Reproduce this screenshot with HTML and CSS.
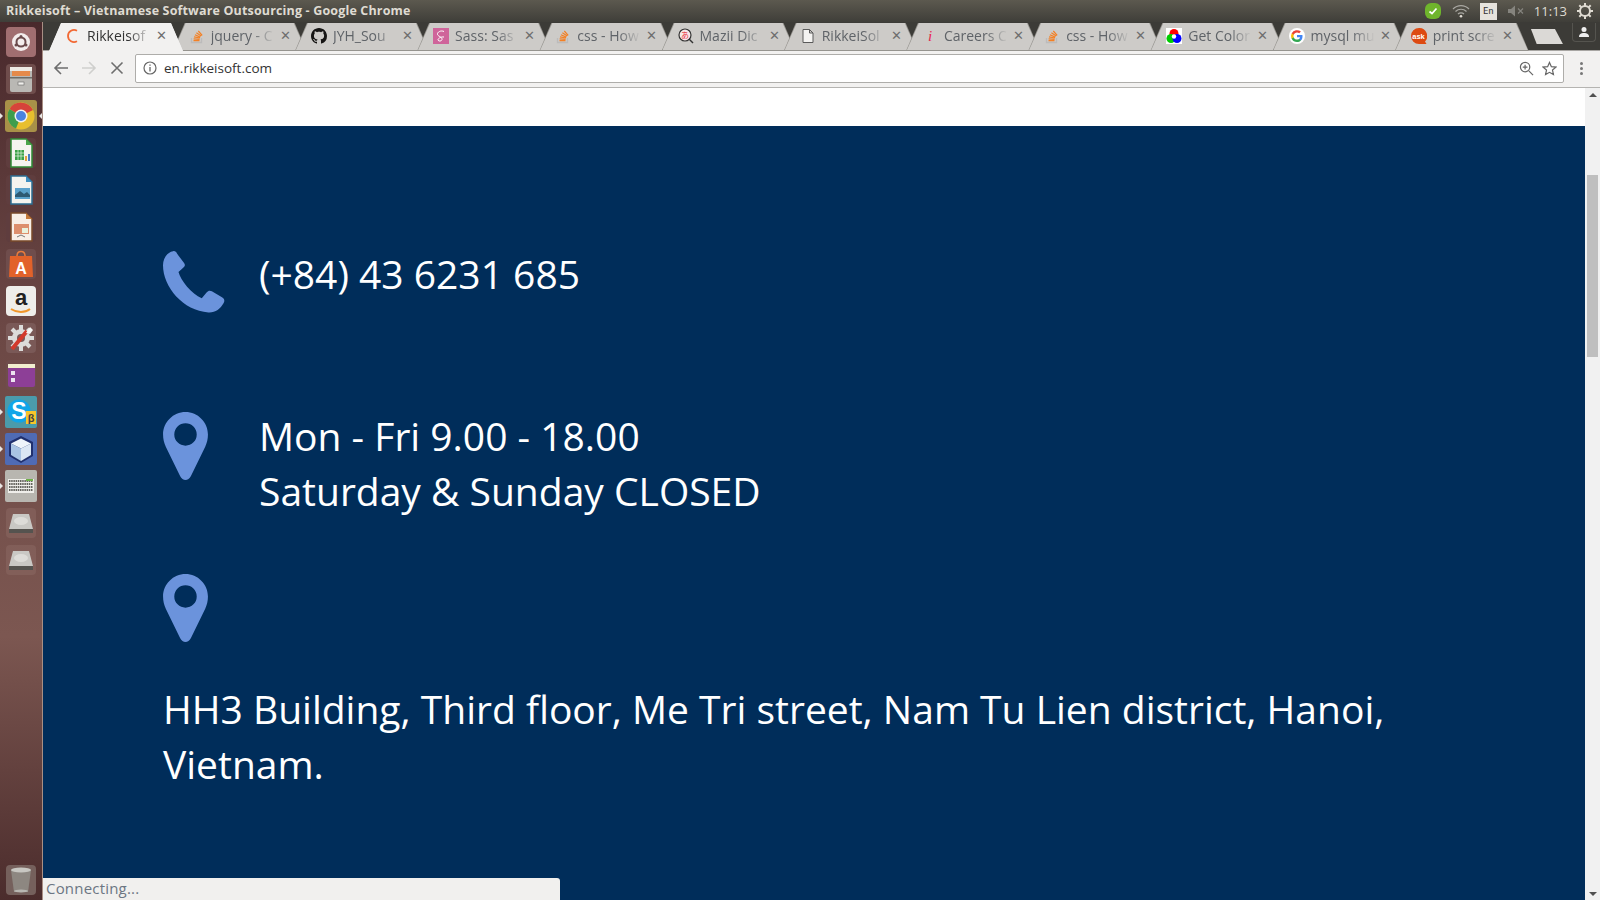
FILE: index.html
```html
<!DOCTYPE html>
<html lang="en">
<head>
  <meta charset="UTF-8" />
  <title>Rikkeisoft – Vietnamese Software Outsourcing - Google Chrome</title>
  <link rel="stylesheet" href="styles.css">
</head>
<body>
  <svg class="defs" width="0" height="0">
    <symbol id="so" viewBox="0 0 16 16">
      <path d="M2.500 10v4.500h10V10" fill="none" stroke="#bcbbbb" stroke-width="1.300"/>
      <path d="M4.500 12.700h6M4.600 10.800l6 .5M5 8.800l5.900 1.200M5.900 6.700l5.400 2.400M7.400 4.700l4.800 3.400M9.300 3l3.900 4.400" fill="none" stroke="#f48024" stroke-width="1.200"/>
    </symbol>
    <symbol id="pin" viewBox="0 0 132 200">
      <path fill-rule="evenodd" d="M66 0C30 0 0 30 0 66c0 14 3 24 8 36l42 86c8 16 24 16 32 0l42-86c5-12 8-22 8-36C132 30 102 0 66 0zm0 33a33 33 0 1 1 0 66 33 33 0 0 1 0-66z"/>
    </symbol>
    <symbol id="disk" viewBox="0 0 32 32">
      <rect x="1" y="1" width="30" height="30" rx="4" fill="#8a6763" fill-opacity=".55"/>
      <path d="M8 7h16l4 15H4z" fill="#c9c8c4"/>
      <path d="M4 22h24v4H4z" fill="#55534f"/>
      <ellipse cx="16" cy="14" rx="7" ry="4" fill="#dddcd8"/>
    </symbol>
  </svg>

  <div class="titlebar">
    <span class="title">Rikkeisoft – Vietnamese Software Outsourcing - Google Chrome</span>
    <div class="tray">
      <svg class="tray-skype" width="18" height="18" viewBox="0 0 18 18"><rect x="1" y="1" width="16" height="16" rx="6" fill="#6fb52c"/><path d="M5.500 9.500l2.500 2 4.500-5" fill="none" stroke="#fff" stroke-width="1.700"/></svg>
      <svg class="tray-wifi" width="18" height="14" viewBox="0 0 18 14"><path d="M1 5c4.500-4.500 11.500-4.500 16 0M3.500 7.500c3-3 8-3 11 0M6 10c1.600-1.600 4.400-1.600 6 0" fill="none" stroke="#a9a8a2" stroke-width="1.200"/><circle cx="9" cy="12.200" r="1.300" fill="#dfdbd2"/></svg>
      <span class="tray-lang">En</span>
      <svg class="tray-sound" width="16" height="12" viewBox="0 0 16 12"><path d="M0 4h3l4-3.500v11L3 8H0z" fill="#85847e"/><path d="M10 3.500l5 5M15 3.500l-5 5" stroke="#85847e" stroke-width="1.200"/></svg>
      <span class="tray-time">11:13</span>
      <svg class="tray-gear" width="16" height="16" viewBox="0 0 16 16"><circle cx="8" cy="8" r="5" fill="none" stroke="#dfdbd2" stroke-width="2"/><path d="M8 0v3M8 13v3M0 8h3M13 8h3M2.300 2.300l2.100 2.100M11.600 11.600l2.100 2.100M13.700 2.300l-2.100 2.100M4.400 11.600l-2.100 2.100" stroke="#dfdbd2" stroke-width="2"/></svg>
    </div>
  </div>

  <div class="desktop">
    <nav class="launcher">
      <svg class="tile" viewBox="0 0 32 32"><rect x="1" y="1" width="30" height="30" rx="4" fill="#a06e70"/><circle cx="16" cy="16" r="9" fill="#f3ecec"/><circle cx="16" cy="16" r="4.500" fill="none" stroke="#6b4a4c" stroke-width="2"/><circle cx="16" cy="10.500" r="1.500" fill="#6b4a4c"/><circle cx="11" cy="19" r="1.500" fill="#6b4a4c"/><circle cx="21" cy="19" r="1.500" fill="#6b4a4c"/></svg>
      <svg class="tile" viewBox="0 0 32 32"><rect x="1" y="1" width="30" height="30" rx="4" fill="#6f4d4c"/><rect x="5" y="4" width="22" height="25" rx="2" fill="#b9b8b4"/><rect x="5" y="4" width="22" height="4" fill="#ece9e4"/><rect x="7" y="8" width="18" height="5" fill="#e58a4a"/><rect x="5" y="14" width="22" height="1.500" fill="#6d6c68"/><rect x="13" y="19" width="6" height="3" fill="#f0efec" stroke="#666" stroke-width=".6"/></svg>
      <div class="running focused">
        <svg class="tile" viewBox="0 0 32 32"><rect width="32" height="32" rx="3" fill="#a89148"/><circle cx="16" cy="16" r="13.500" fill="#e8bf2e"/><path d="M16 16L4.500 9A13.500 13.500 0 0 1 28 10z" fill="#d6433a"/><path d="M16 16L4.500 9A13.500 13.500 0 0 0 11 28.500z" fill="#3e9d4d"/><circle cx="16" cy="16" r="6.500" fill="#f2f2f2"/><circle cx="16" cy="16" r="5" fill="#4a83e0"/></svg>
      </div>
      <svg class="tile" viewBox="0 0 32 32"><rect x="1" y="1" width="30" height="30" rx="4" fill="#5f3d3e"/><path d="M6 2h15l6 6v22H6z" fill="#f4f4ef" stroke="#2f8b36" stroke-width="1.500"/><path d="M21 2l6 6h-6z" fill="#4aa54a"/><rect x="10" y="13" width="9" height="10" fill="#3aa146"/><path d="M10 16h9M10 19h9M13 13v10M16 13v10" stroke="#e8f3e5" stroke-width=".7"/><rect x="20" y="19" width="2" height="5" fill="#e0a33c"/><rect x="23" y="17" width="2" height="7" fill="#4b7fc4"/></svg>
      <svg class="tile" viewBox="0 0 32 32"><rect x="1" y="1" width="30" height="30" rx="4" fill="#5f3d3e"/><path d="M6 2h15l6 6v22H6z" fill="#f4f4ef" stroke="#2b6d92" stroke-width="1.500"/><path d="M21 2l6 6h-6z" fill="#3f8fc0"/><rect x="10" y="14" width="15" height="11" fill="#5aa2cb"/><path d="M10 21l5-4 4 3 3-2 3 3v2H10z" fill="#2d5a72"/></svg>
      <svg class="tile" viewBox="0 0 32 32"><rect x="1" y="1" width="30" height="30" rx="4" fill="#5f3d3e"/><path d="M6 2h15l6 6v22H6z" fill="#f8efe6" stroke="#7a4a2a" stroke-width="1.500"/><path d="M21 2l6 6h-6z" fill="#c47a3a"/><rect x="9" y="13" width="15" height="10" fill="#dd8f6c"/><rect x="17" y="17" width="6" height="5" fill="#e9f2dc"/><path d="M12 26l4-2 4 2" fill="none" stroke="#555" stroke-width=".8"/></svg>
      <svg class="tile" viewBox="0 0 32 32"><rect x="1" y="1" width="30" height="30" rx="4" fill="#6f4d4c"/><path d="M12 8c0-6 8-6 8 0" fill="none" stroke="#e87b3c" stroke-width="1.500"/><path d="M5 8h22l1 21H4z" fill="#e2622a"/><text class="tile-letter" x="16" y="26" font-size="16" fill="#fff">A</text></svg>
      <svg class="tile" viewBox="0 0 32 32"><rect x="1" y="1" width="30" height="30" rx="4" fill="#efeeea"/><text class="tile-letter" x="16" y="20" font-size="22" fill="#222">a</text><path d="M6 24c6 4 14 4 19 0" fill="none" stroke="#f0962a" stroke-width="2"/></svg>
      <svg class="tile" viewBox="0 0 32 32"><rect x="1" y="1" width="30" height="30" rx="4" fill="#7a5957"/><circle cx="16" cy="16" r="9" fill="#dcdcda"/><path d="M16 3v26M3 16h26M7 7l18 18M25 7L7 25" stroke="#dcdcda" stroke-width="4"/><circle cx="16" cy="16" r="4" fill="#7a5957"/><path d="M7 27L22 9" stroke="#d33a2c" stroke-width="4"/><path d="M21 11l4-6 3 3-3 4z" fill="#f4f4f2"/></svg>
      <svg class="tile" viewBox="0 0 32 32"><rect x="1" y="1" width="30" height="30" rx="4" fill="#6f4d4c"/><rect x="3" y="5" width="27" height="23" rx="2" fill="#8d3f97"/><rect x="3" y="5" width="27" height="4" fill="#f1eed0"/><rect x="6" y="12" width="4" height="4" fill="#ece2ef"/><rect x="6" y="19" width="4" height="4" fill="#ece2ef"/></svg>
      <div class="running">
        <svg class="tile" viewBox="0 0 32 32"><rect width="32" height="32" rx="2" fill="#4b9bab"/><circle cx="14" cy="15" r="11.500" fill="#10a5e8"/><text class="tile-letter" x="14" y="23" font-size="23" fill="#fff">S</text><rect x="21" y="15" width="10" height="13" fill="#f7c52b"/><text class="tile-letter" x="26" y="26" font-size="11" fill="#444">β</text></svg>
      </div>
      <div class="running">
        <svg class="tile" viewBox="0 0 32 32"><rect width="32" height="32" rx="2" fill="#4f6bb5"/><path d="M16 3l12 6v14l-12 7-12-7V9z" fill="#20306e"/><path d="M16 5.500l10 5-10 5-10-5z" fill="#eef4fa"/><path d="M6 10.500l10 5V28l-10-6z" fill="#a9c4e4"/><path d="M26 10.500l-10 5V28l10-6z" fill="#dbe7f4"/></svg>
      </div>
      <div class="running">
        <svg class="tile" viewBox="0 0 32 32"><rect width="32" height="32" rx="2" fill="#b8b6b0"/><rect x="3" y="9" width="26" height="14" fill="#efeeea"/><path d="M4 11h24M4 14h24M4 17h24M4 20h24" stroke="#66655f" stroke-width="2" stroke-dasharray="1.500 .7"/><path d="M21 9h7v2h-7z" fill="#6fb04a"/></svg>
      </div>
      <svg class="tile"><use href="#disk"/></svg>
      <svg class="tile"><use href="#disk"/></svg>
      <svg class="tile trash" viewBox="0 0 32 32"><rect x="1" y="1" width="30" height="30" rx="4" fill="#75605c"/><path d="M6 6h20l-3 22H9z" fill="#8d8781"/><ellipse cx="16" cy="6" rx="10" ry="2.500" fill="#c8c7c2"/><ellipse cx="16" cy="27" rx="7" ry="1.500" fill="#b9b7b2"/></svg>
    </nav>

    <div class="browser">
      <div class="tabstrip">
        <div class="tab active">
          <svg class="favicon" viewBox="0 0 16 16"><path d="M12 2.800A6 6 0 1 0 12 13.200" fill="none" stroke="#f26a35" stroke-width="1.800"/></svg>
          <span class="tab-label">Rikkeisof</span><span class="tab-close">✕</span>
        </div>
        <div class="tab">
          <svg class="favicon"><use href="#so"/></svg>
          <span class="tab-label">jquery - C</span><span class="tab-close">✕</span>
        </div>
        <div class="tab">
          <svg class="favicon" viewBox="0 0 16 16"><path fill="#161514" d="M8 0C3.580 0 0 3.580 0 8c0 3.540 2.290 6.530 5.470 7.590.4.070.55-.17.55-.38 0-.19-.01-.82-.01-1.490-2.010.37-2.530-.49-2.690-.94-.09-.23-.48-.94-.82-1.130-.28-.15-.68-.52-.01-.53.63-.01 1.080.58 1.230.82.720 1.210 1.870.87 2.330.66.070-.52.280-.87.510-1.070-1.780-.2-3.640-.89-3.640-3.950 0-.87.310-1.590.820-2.150-.08-.2-.36-1.020.08-2.120 0 0 .67-.21 2.200.82.640-.18 1.320-.27 2-.27s1.360.09 2 .27c1.530-1.040 2.200-.82 2.200-.82.440 1.100.160 1.920.080 2.120.510.560.820 1.270.820 2.150 0 3.070-1.870 3.750-3.650 3.950.29.25.54.73.54 1.480 0 1.070-.01 1.930-.01 2.200 0 .21.150.46.550.38A8.013 8.013 0 0 0 16 8c0-4.420-3.580-8-8-8z"/></svg>
          <span class="tab-label">JYH_Sou</span><span class="tab-close">✕</span>
        </div>
        <div class="tab">
          <svg class="favicon" viewBox="0 0 16 16"><rect width="16" height="16" fill="#cf649a"/><path d="M11 3.500C8 2 4 4 4.500 6.500c.4 1.800 5 2.500 4.500 5-.3 1.800-3.500 2.200-4 .5-.4-1.400 3-3.500 6-3" fill="none" stroke="#fff" stroke-width="1"/></svg>
          <span class="tab-label">Sass: Sas</span><span class="tab-close">✕</span>
        </div>
        <div class="tab">
          <svg class="favicon"><use href="#so"/></svg>
          <span class="tab-label">css - How</span><span class="tab-close">✕</span>
        </div>
        <div class="tab">
          <svg class="favicon" viewBox="0 0 16 16"><circle cx="7" cy="7" r="6" fill="#f6e9e9" stroke="#333" stroke-width="1.200"/><path d="M11 11l4 4" stroke="#333" stroke-width="1.400"/><text class="fav-kana" x="7" y="10" font-size="8" fill="#e8343f">あ</text></svg>
          <span class="tab-label">Mazii Dic</span><span class="tab-close">✕</span>
        </div>
        <div class="tab">
          <svg class="favicon" viewBox="0 0 16 16"><path d="M3 1.500h6.500l3.500 3.500v9.500H3zM9.500 1.500V5H13" fill="#f4f3f1" stroke="#5a5a5a" stroke-width="1"/></svg>
          <span class="tab-label">RikkeiSol</span><span class="tab-close">✕</span>
        </div>
        <div class="tab">
          <svg class="favicon" viewBox="0 0 16 16"><text class="fav-i" x="8" y="13" font-size="15" fill="#e8264f">i</text></svg>
          <span class="tab-label">Careers C</span><span class="tab-close">✕</span>
        </div>
        <div class="tab">
          <svg class="favicon"><use href="#so"/></svg>
          <span class="tab-label">css - How</span><span class="tab-close">✕</span>
        </div>
        <div class="tab">
          <svg class="favicon" viewBox="0 0 16 16"><rect width="16" height="16" fill="#fff"/><circle cx="8" cy="5.500" r="4.500" fill="#f00"/><circle cx="5" cy="10.500" r="4.500" fill="#0c0"/><circle cx="11" cy="10.500" r="4.500" fill="#00f"/><circle cx="8" cy="8.500" r="2.200" fill="#fff"/></svg>
          <span class="tab-label">Get Color</span><span class="tab-close">✕</span>
        </div>
        <div class="tab">
          <svg class="favicon" viewBox="0 0 16 16"><circle cx="8" cy="8" r="8" fill="#fff"/><path d="M13.500 8.200c0-.4 0-.8-.1-1.200H8v2.300h3.100a2.700 2.700 0 0 1-1.100 1.700v1.500h1.900c1.100-1 1.600-2.500 1.600-4.300z" fill="#4285f4"/><path d="M8 14c1.500 0 2.900-.5 3.900-1.500L10 11c-.5.400-1.200.6-2 .6-1.500 0-2.800-1-3.300-2.400h-2v1.500A6 6 0 0 0 8 14z" fill="#34a853"/><path d="M4.700 9.200a3.500 3.500 0 0 1 0-2.400V5.300h-2a6 6 0 0 0 0 5.400z" fill="#fbbc05"/><path d="M8 4.400c.9 0 1.600.3 2.200.9l1.700-1.700A6 6 0 0 0 2.700 5.300l2 1.500C5.200 5.400 6.500 4.400 8 4.400z" fill="#ea4335"/></svg>
          <span class="tab-label">mysql mu</span><span class="tab-close">✕</span>
        </div>
        <div class="tab">
          <svg class="favicon" viewBox="0 0 16 16"><path d="M8 0a8 8 0 1 0 0 16h7.500l-1.500-2.500A8 8 0 0 0 8 0z" fill="#dd4a12"/><text class="fav-ask" x="7.500" y="10.500" font-size="7.500" fill="#fff">ask</text></svg>
          <span class="tab-label">print scre</span><span class="tab-close">✕</span>
        </div>
        <div class="newtab"></div>
        <div class="profile">
          <svg width="12" height="12" viewBox="0 0 12 12"><circle cx="6" cy="3.500" r="2.500" fill="#eee"/><path d="M1 11c0-3 2-4 5-4s5 1 5 4z" fill="#eee"/></svg>
        </div>
      </div>

      <div class="toolbar">
        <svg class="tool" viewBox="0 0 16 16"><path d="M15 8H2M8 2L2 8l6 6" fill="none" stroke="#6e6e6e" stroke-width="1.600"/></svg>
        <svg class="tool" viewBox="0 0 16 16"><path d="M1 8h13M8 2l6 6-6 6" fill="none" stroke="#cfcfcd" stroke-width="1.600"/></svg>
        <svg class="tool" viewBox="0 0 16 16"><path d="M2.500 2.500l11 11M13.500 2.500l-11 11" fill="none" stroke="#6e6e6e" stroke-width="1.600"/></svg>
        <div class="omnibox">
          <svg class="site-info" viewBox="0 0 14 14"><circle cx="7" cy="7" r="6" fill="none" stroke="#666" stroke-width="1.200"/><path d="M7 6v4.500M7 3.500v1.300" stroke="#666" stroke-width="1.300"/></svg>
          <span class="url">en.rikkeisoft.com</span>
          <svg class="omni-icon" viewBox="0 0 16 16"><circle cx="6.500" cy="6.500" r="5" fill="none" stroke="#666" stroke-width="1.300"/><path d="M10.500 10.500l4.500 4.500M4 6.500h5M6.500 4v5" stroke="#666" stroke-width="1.300"/></svg>
          <svg class="omni-icon" viewBox="0 0 16 16"><path d="M8 1.500l2 4.500 4.800.5-3.600 3.200 1 4.800L8 12.100l-4.200 2.400 1-4.800L1.200 6.500 6 6z" fill="none" stroke="#666" stroke-width="1.300"/></svg>
        </div>
        <div class="menu-dots"><i></i><i></i><i></i></div>
      </div>

      <div class="viewport">
        <main class="page">
          <div class="page-top"></div>
          <section class="contact">
            <div class="contact-item">
              <div class="contact-icon">
                <svg class="icon-phone" viewBox="70 60 184 186"><path d="M70 105C70 85 82 66 100 63c6-1 9 2 12 8l20 26c5 7 3 11-2 15l-14 13c6 25 39 65 69 78l15-18c4-5 9-6 15-3l30 18c7 4 9 10 5 17-10 18-25 29-45 28C130 240 70 170 70 105z"/></svg>
              </div>
              <p>(+84) 43 6231 685</p>
            </div>
            <div class="contact-item">
              <div class="contact-icon"><svg class="icon-pin"><use href="#pin"/></svg></div>
              <p>Mon - Fri 9.00 - 18.00<br>Saturday &amp; Sunday CLOSED</p>
            </div>
            <div class="contact-item">
              <div class="contact-icon"><svg class="icon-pin"><use href="#pin"/></svg></div>
              <p class="address">HH3 Building, Third floor, Me Tri street, Nam Tu Lien district, Hanoi, Vietnam.</p>
            </div>
          </section>
        </main>
        <div class="scrollbar">
          <span class="arrow up"></span>
          <div class="thumb"></div>
          <span class="arrow down"></span>
        </div>
        <div class="status">Connecting...</div>
      </div>
    </div>
  </div>
</body>
</html>
```

FILE: styles.css
```css
* {
  box-sizing: border-box;
}

html, body {
  margin: 0;
  height: 100%;
  overflow: hidden;
}

body {
  display: flex;
  flex-direction: column;
  font-family: "Open Sans", "Noto Sans", sans-serif;
}

.defs {
  position: absolute;
}

/* top panel */
.titlebar {
  height: 22px;
  flex: none;
  display: flex;
  align-items: center;
  justify-content: space-between;
  padding-left: 6px;
  background: linear-gradient(#5c594f, #3f3e39);
  color: #dfdbd2;
}

.title {
  margin-bottom: 2px;
  font-size: 12.5px;
  font-weight: 700;
  letter-spacing: 0.16px;
}

.tray {
  display: flex;
  align-items: center;
  height: 22px;
  padding-right: 7px;
}

.tray-skype { margin-right: 10px; }
.tray-wifi { margin-right: 10px; }

.tray-lang {
  width: 17px;
  height: 17px;
  margin-right: 11px;
  background: #e6e3dc;
  color: #333;
  font: 9px/17px "DejaVu Sans Mono", monospace;
  text-align: center;
}

.tray-sound { margin-right: 10px; }

.tray-time {
  margin-right: 10px;
  font-size: 13px;
  color: #dfdbd2;
}

/* launcher */
.desktop {
  flex: 1;
  display: flex;
  min-height: 0;
}

.launcher {
  width: 43px;
  flex: none;
  display: flex;
  flex-direction: column;
  gap: 5px;
  padding: 4px 5px;
  background: linear-gradient(#49292c, #6c4845 35%, #7c5751 70%, #4b2c2c);
  border-right: 1px solid #a98f84;
}

.tile {
  display: block;
  width: 32px;
  height: 32px;
  flex: none;
}

.running {
  position: relative;
}

.running::before {
  content: "";
  position: absolute;
  left: -5px;
  top: 13px;
  border: 3px solid transparent;
  border-left-color: #e8e6e3;
}

.focused::after {
  content: "";
  position: absolute;
  right: -5px;
  top: 13px;
  border: 3px solid transparent;
  border-right-color: #e8e6e3;
}

.tile-letter {
  font-family: "Liberation Sans", sans-serif;
  font-weight: 700;
  text-anchor: middle;
}

.trash {
  margin-top: auto;
}

/* browser window */
.browser {
  flex: 1;
  min-width: 0;
  display: flex;
  flex-direction: column;
}

.tabstrip {
  height: 29px;
  flex: none;
  display: flex;
  padding-left: 6px;
  padding-top: 1px;
  background: #3c3b37;
  box-shadow: inset 0 -1px 0 #a8a6a3;
}

.tab {
  position: relative;
  width: 134px;
  flex: none;
  margin-right: -11.8px;
  display: flex;
  align-items: center;
  padding: 0 0 3px 16px;
  background: #96948f;
  clip-path: polygon(0 100%, 12px 0, calc(100% - 12px) 0, 100% 100%);
  font-size: 14px;
  color: #5f6368;
}

.tab::before {
  content: "";
  position: absolute;
  inset: 0 1px 1px;
  background: #cdcbc8;
  clip-path: polygon(0 100%, 12px 0, calc(100% - 12px) 0, 100% 100%);
}

.tab > * {
  position: relative;
}

.tab.active {
  z-index: 2;
  margin-right: -10.3px;
  background: #f2f1f0;
  color: #333;
}

.tab.active::before {
  inset: 0;
  background: #f2f1f0;
}

.favicon {
  width: 16px;
  height: 16px;
  flex: none;
  margin-right: 6px;
}

.fav-kana {
  font-family: "Noto Sans CJK JP", sans-serif;
  text-anchor: middle;
}

.fav-i {
  font-family: "Liberation Serif", serif;
  font-style: italic;
  text-anchor: middle;
}

.fav-ask {
  font-family: "Liberation Sans", sans-serif;
  font-weight: 700;
  text-anchor: middle;
}

.tab-label {
  width: 64px;
  flex: none;
  overflow: hidden;
  white-space: nowrap;
  -webkit-mask-image: linear-gradient(to right, #000 65%, transparent);
  mask-image: linear-gradient(to right, #000 65%, transparent);
}

.tab-close {
  margin-left: 5px;
  font-size: 12.5px;
  color: #6e6e6e;
}

.newtab {
  width: 32px;
  height: 15px;
  flex: none;
  margin: 6px 0 0 14px;
  background: #dbd9d6;
  clip-path: polygon(0 0, 75% 0, 100% 100%, 18% 100%);
}

.profile {
  width: 24px;
  height: 19px;
  flex: none;
  margin-left: 9px;
  display: flex;
  align-items: center;
  justify-content: center;
  border: 1px solid #55544f;
  border-top: 0;
  border-radius: 0 0 4px 4px;
}

/* toolbar */
.toolbar {
  height: 37px;
  flex: none;
  display: flex;
  align-items: center;
  gap: 12px;
  padding: 0 0 2px 10px;
  background: #f2f1f0;
  border-bottom: 1px solid #b5b4b1;
}

.tool {
  width: 16px;
  height: 16px;
  flex: none;
}

.omnibox {
  flex: 1;
  height: 29px;
  margin-left: -2px;
  margin-right: -1px;
  display: flex;
  align-items: center;
  padding: 0 6px 0 7px;
  background: #fff;
  border: 1px solid #aeadaa;
  border-radius: 2px;
}

.site-info {
  width: 14px;
  height: 14px;
  margin-right: 7px;
}

.url {
  flex: 1;
  font-size: 13.5px;
  color: #333;
}

.omni-icon {
  width: 15px;
  height: 15px;
  margin-left: 8px;
}

.menu-dots {
  width: 37px;
  margin-left: -12px;
  display: flex;
  flex-direction: column;
  align-items: center;
  gap: 2px;
}

.menu-dots i {
  width: 3px;
  height: 3px;
  border-radius: 50%;
  background: #777;
}

/* page */
.viewport {
  position: relative;
  flex: 1;
  min-height: 0;
  display: flex;
}

.page {
  flex: 1;
  min-width: 0;
  overflow: hidden;
  background: #fff;
}

.page-top {
  height: 38px;
}

.contact {
  height: 100%;
  padding: 121px 120px 0;
  background: #002d5a;
  color: #fff;
}

.contact-item {
  display: flex;
  flex-wrap: wrap;
  margin-bottom: 52px;
}

.contact-icon {
  width: 96px;
  height: 110px;
  padding-top: 3px;
}

.contact-icon svg {
  display: block;
  fill: #6b93dc;
}

.icon-phone {
  width: 62px;
  height: 63px;
}

.icon-pin {
  width: 45px;
  height: 68px;
}

.contact p {
  margin: -1px 0 0;
  font-size: 39px;
  line-height: 55px;
}

.contact .address {
  width: 100%;
  margin-top: 0;
}

.scrollbar {
  width: 15px;
  flex: none;
  display: flex;
  flex-direction: column;
  align-items: center;
  background: #f1f1f1;
}

.arrow {
  width: 0;
  height: 0;
  border-left: 4px solid transparent;
  border-right: 4px solid transparent;
}

.arrow.up {
  margin-top: 5px;
  border-bottom: 4px solid #505050;
}

.arrow.down {
  margin-top: auto;
  margin-bottom: 4px;
  border-top: 4px solid #505050;
}

.thumb {
  width: 11px;
  height: 182px;
  margin-top: 78px;
  background: #bfbfbf;
}

.status {
  position: absolute;
  left: 0;
  bottom: 0;
  width: 517px;
  height: 22px;
  padding: 0 0 0 3px;
  background: #f1f0ee;
  border-top-right-radius: 3px;
  font-size: 15px;
  letter-spacing: 0.2px;
  color: #6c7683;
}
```
